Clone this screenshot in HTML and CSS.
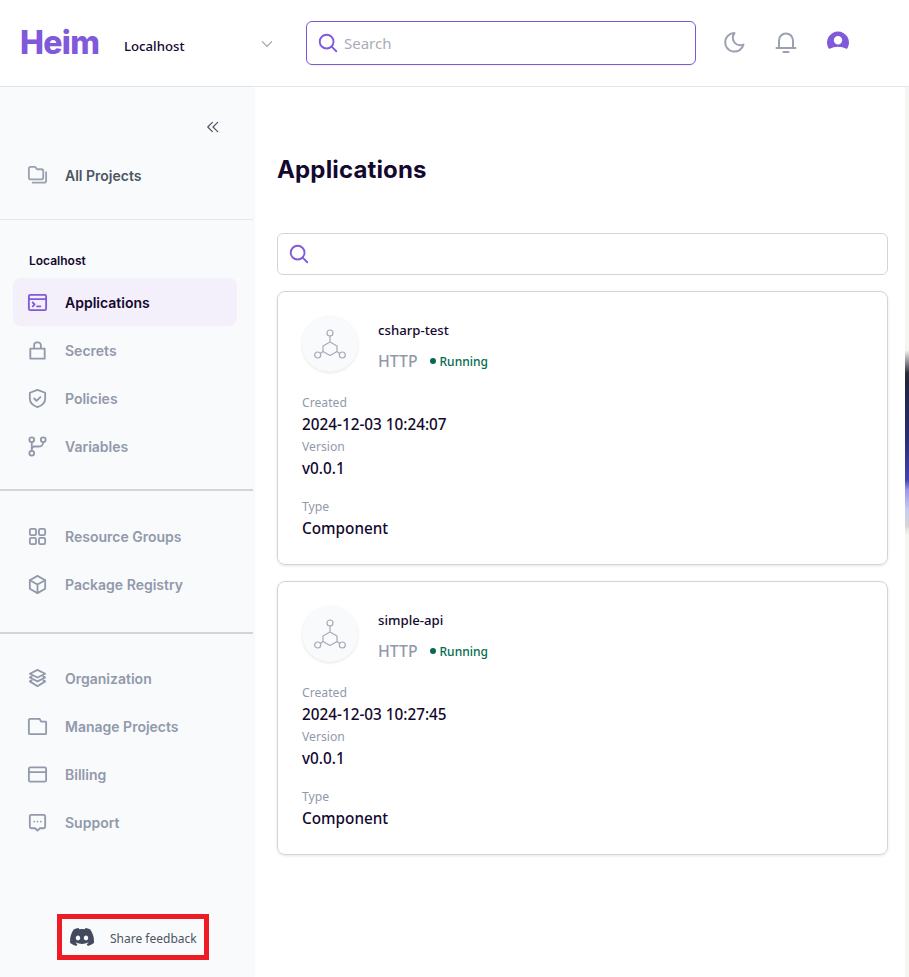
FILE: index.html
```html
<!DOCTYPE html>
<html lang="en">
<head>
  <meta charset="UTF-8" />
  <meta name="viewport" content="width=device-width, initial-scale=1.0"/>
  <title>Heim - Applications</title>
  <link rel="stylesheet" href="styles.css">
</head>
<body>
  <header class="topbar">
    <div class="logo">Heim</div>
    <div class="env-select">
      <span>Localhost</span>
      <svg class="chevron" viewBox="0 0 24 24"><path d="M5 8.500l7 7 7-7"/></svg>
    </div>
    <div class="top-search">
      <svg class="search-icon" viewBox="0 0 24 24"><circle cx="10.500" cy="10.500" r="7.500"/><path d="M16 16l5 5"/></svg>
      <span>Search</span>
    </div>
    <div class="top-icons">
      <svg class="top-icon" viewBox="0 0 24 24"><path d="M12.500 3a9.300 9.300 0 1 0 9 11.500c-1 .6-2 .8-3.200.8a7.500 7.500 0 0 1-7.500-7.500c0-1.900.6-3.500 1.700-4.800z"/></svg>
      <svg class="top-icon" viewBox="0 0 24 24"><path d="M2.500 18h19M5 18v-7.500a7 7 0 0 1 14 0V18M9.500 22h5"/></svg>
      <svg class="avatar" viewBox="0 0 24 22"><path fill-rule="evenodd" d="M12 .5a11 11 0 0 1 9.800 16c-.4.800-1 1.500-1.500 1.200-2.500-1.300-5.300-2-8.300-2s-5.800.7-8.300 2c-.5.300-1.100-.4-1.500-1.200A11 11 0 0 1 12 .5zm0 4.500a4.200 4.200 0 1 0 0 8.400 4.200 4.200 0 0 0 0-8.400z"/></svg>
    </div>
  </header>

  <div class="shell">
    <aside class="sidebar">
      <div class="collapse-row">
        <svg class="collapse" viewBox="0 0 24 24"><path d="M11 4l-8 8 8 8M20 4l-8 8 8 8"/></svg>
      </div>
      <div class="nav-item nav-dark">
        <svg class="nav-icon" viewBox="0 0 24 24"><path d="M3 5a2 2 0 0 1 2-2h4.500l2 2.500H16a2 2 0 0 1 2 2V14a2 2 0 0 1-2 2H5a2 2 0 0 1-2-2z"/><path d="M21 8.500V17.500a2 2 0 0 1-2 2H7"/></svg>
        All Projects
      </div>
      <div class="rule rule-light"></div>

      <div class="section-label">Localhost</div>
      <div class="nav-item nav-active">
        <svg class="nav-icon" viewBox="0 0 24 24"><rect x="3" y="4" width="18" height="16" rx="1.500"/><path d="M3 8.500h18M7 12l2 2-2 2M11.500 16H15"/></svg>
        Applications
      </div>
      <div class="nav-item">
        <svg class="nav-icon" viewBox="0 0 24 24"><path d="M4.500 10h15v10.500h-15zM8.500 10V6.500a3 3 0 0 1 3-3h1a3 3 0 0 1 3 3V10"/></svg>
        Secrets
      </div>
      <div class="nav-item">
        <svg class="nav-icon" viewBox="0 0 24 24"><path d="M12 3l8 3v6c0 4.500-3.300 7.500-8 9-4.700-1.500-8-4.500-8-9V6z"/><path d="M8.500 12l2.500 2.500 4-4"/></svg>
        Policies
      </div>
      <div class="nav-item">
        <svg class="nav-icon" viewBox="0 0 24 24"><circle cx="6" cy="5" r="2.500"/><circle cx="6" cy="19" r="2.500"/><circle cx="18" cy="5" r="2.500"/><path d="M6 7.500v9M18 7.500c0 3-2.500 4.500-5 4.500H9c-1.500 0-3 1-3 3"/></svg>
        Variables
      </div>
      <div class="rule rule-first"></div>

      <div class="nav-item">
        <svg class="nav-icon" viewBox="0 0 24 24"><rect x="4" y="4" width="6.500" height="6.500" rx="1.500"/><rect x="13.500" y="4" width="6.500" height="6.500" rx="1.500"/><rect x="4" y="13.500" width="6.500" height="6.500" rx="1.500"/><rect x="13.500" y="13.500" width="6.500" height="6.500" rx="1.500"/></svg>
        Resource Groups
      </div>
      <div class="nav-item">
        <svg class="nav-icon" viewBox="0 0 24 24"><path d="M12 3l8 4.500v9L12 21l-8-4.500v-9z"/><path d="M4 7.500l8 4.500 8-4.500M12 12v9"/></svg>
        Package Registry
      </div>
      <div class="rule rule-second"></div>

      <div class="nav-item">
        <svg class="nav-icon" viewBox="0 0 24 24"><path d="M12 3l8 4-8 4-8-4z"/><path d="M6 9.800L4 11l8 4 8-4-2-1.200"/><path d="M6 13.800L4 15l8 5 8-5-2-1.200"/></svg>
        Organization
      </div>
      <div class="nav-item">
        <svg class="nav-icon" viewBox="0 0 24 24"><path d="M3 5.500A1.500 1.500 0 0 1 4.500 4H14l2 3h4.500a.5.500 0 0 1 .5.500V19a1 1 0 0 1-1 1H4a1 1 0 0 1-1-1z"/></svg>
        Manage Projects
      </div>
      <div class="nav-item">
        <svg class="nav-icon" viewBox="0 0 24 24"><rect x="3" y="4.500" width="18" height="15" rx="1.500"/><path d="M3 9.500h18"/></svg>
        Billing
      </div>
      <div class="nav-item">
        <svg class="nav-icon" viewBox="0 0 24 24"><path d="M5.500 4h13A1.500 1.500 0 0 1 20 5.500v11a1.500 1.500 0 0 1-1.500 1.500h-4L12 20.500 9.500 18h-4A1.500 1.500 0 0 1 4 16.500v-11A1.500 1.500 0 0 1 5.500 4z"/><path d="M8.500 11h.01M12 11h.01M15.500 11h.01"/></svg>
        Support
      </div>

      <div class="feedback">
        <svg class="discord" viewBox="0 0 24 18"><path fill-rule="evenodd" d="M20.300 1.500A19.800 19.800 0 0 0 15.400 0c-.2.400-.5.900-.6 1.300a18.400 18.400 0 0 0-5.500 0C9.100.9 8.800.4 8.600 0a19.800 19.800 0 0 0-4.900 1.500C.6 6.100-.3 10.600.200 15a20 20 0 0 0 6 3c.5-.7.900-1.400 1.300-2.100-.7-.3-1.400-.6-2-1l.5-.4a14.200 14.200 0 0 0 12.100 0l.5.400c-.6.400-1.300.7-2 1 .4.700.8 1.400 1.300 2.100a20 20 0 0 0 6-3c.5-5.100-.9-9.500-3.600-13.500zM8 12.300c-1.200 0-2.200-1.100-2.200-2.400S6.800 7.500 8 7.500s2.200 1.100 2.200 2.400-1 2.400-2.200 2.400zm8 0c-1.200 0-2.200-1.100-2.200-2.400s1-2.400 2.200-2.400 2.200 1.100 2.200 2.400-1 2.400-2.200 2.400z"/></svg>
        <span>Share feedback</span>
      </div>
    </aside>

    <main class="content">
      <h1>Applications</h1>
      <div class="filter">
        <svg class="search-icon" viewBox="0 0 24 24"><circle cx="10.500" cy="10.500" r="7.500"/><path d="M16 16l5 5"/></svg>
      </div>

      <section class="card">
        <div class="card-head">
          <div class="app-badge">
            <svg class="app-icon" viewBox="0 0 34 34"><circle cx="17" cy="6" r="3"/><circle cx="4.700" cy="28" r="3"/><circle cx="29.300" cy="28" r="3"/><path d="M17 9v6M17 15l7 4v5.500l-7 4-7-4V19zM10 24.500l-2.700 2M24 24.500l2.700 2"/></svg>
          </div>
          <div>
            <div class="app-name">csharp-test</div>
            <div class="app-meta"><span class="proto">HTTP</span><span class="status"><i class="dot"></i>Running</span></div>
          </div>
        </div>
        <div class="field-label first">Created</div>
        <div class="field-value">2024-12-03 10:24:07</div>
        <div class="field-label">Version</div>
        <div class="field-value">v0.0.1</div>
        <div class="field-label spaced">Type</div>
        <div class="field-value">Component</div>
      </section>

      <section class="card">
        <div class="card-head">
          <div class="app-badge">
            <svg class="app-icon" viewBox="0 0 34 34"><circle cx="17" cy="6" r="3"/><circle cx="4.700" cy="28" r="3"/><circle cx="29.300" cy="28" r="3"/><path d="M17 9v6M17 15l7 4v5.500l-7 4-7-4V19zM10 24.500l-2.700 2M24 24.500l2.700 2"/></svg>
          </div>
          <div>
            <div class="app-name">simple-api</div>
            <div class="app-meta"><span class="proto">HTTP</span><span class="status"><i class="dot"></i>Running</span></div>
          </div>
        </div>
        <div class="field-label first">Created</div>
        <div class="field-value">2024-12-03 10:27:45</div>
        <div class="field-label">Version</div>
        <div class="field-value">v0.0.1</div>
        <div class="field-label spaced">Type</div>
        <div class="field-value">Component</div>
      </section>
    </main>

    <div class="edge-strip"></div>
  </div>
</body>
</html>
```

FILE: styles.css
```css
* {
  box-sizing: border-box;
}
body {
  margin: 0;
  height: 977px;
  overflow: hidden;
  display: flex;
  flex-direction: column;
  font-family: "Noto Sans", sans-serif;
  background: #fff;
  color: #14082f;
}
svg {
  display: block;
  fill: none;
  stroke: currentColor;
  stroke-width: 2;
  stroke-linecap: round;
  stroke-linejoin: round;
}

/* top bar */
.topbar {
  height: 87px;
  flex: none;
  display: flex;
  align-items: flex-start;
  border-bottom: 1px solid #e5e7eb;
  padding-left: 20px;
}
.logo {
  width: 104px;
  margin-top: 22px;
  font-family: Inter, sans-serif;
  font-size: 32px;
  line-height: 42px;
  font-weight: 800;
  letter-spacing: -0.7px;
  color: #8159db;
}
.env-select {
  width: 182px;
  height: 44px;
  margin-top: 24px;
  padding-right: 31px;
  display: flex;
  align-items: center;
  justify-content: space-between;
  font-size: 13.200px;
  font-weight: 500;
}
.chevron {
  width: 16px;
  height: 16px;
  margin-top: -5px;
  stroke-width: 1.800;
  color: #9ca3af;
}
.top-search {
  width: 390px;
  height: 44px;
  margin-top: 21px;
  display: flex;
  align-items: center;
  gap: 5px;
  padding-left: 10px;
  border: 1px solid #7c57d6;
  border-radius: 6px;
  font-size: 15px;
  color: #a9adb8;
  box-shadow: 0 1px 2px rgba(0, 0, 0, 0.05);
}
.search-icon {
  width: 22px;
  height: 22px;
  color: #8159db;
}
.top-icons {
  display: flex;
  align-items: flex-start;
  gap: 28px;
  margin: 30px 0 0 26px;
}
.top-icon {
  width: 24px;
  height: 24px;
  color: #9aa1b1;
}
.avatar {
  width: 24px;
  height: 22px;
  margin-top: 1px;
  fill: #8159db;
  stroke: none;
}

/* sidebar */
.shell {
  flex: 1;
  display: flex;
  min-height: 0;
}
.sidebar {
  width: 253px;
  flex: none;
  display: flex;
  flex-direction: column;
  background: #f9fafb;
  box-shadow: 1px 0 3px rgba(0, 0, 0, 0.05);
  font-family: Inter, sans-serif;
  position: relative;
}
.collapse-row {
  height: 64px;
  display: flex;
  justify-content: flex-end;
  padding: 33px 33px 0 0;
}
.collapse {
  width: 14px;
  height: 14px;
  stroke-width: 2;
  color: #4b5563;
}
.nav-item {
  height: 48px;
  flex: none;
  margin: 0 16px 0 13px;
  padding-left: 13px;
  display: flex;
  align-items: center;
  gap: 16px;
  font-size: 14px;
  font-weight: 600;
  color: #9199ab;
  border-radius: 8px;
}
.nav-dark {
  color: #4b5563;
}
.nav-dark .nav-icon {
  color: #9aa1b1;
}
.nav-active {
  background: #f3effb;
  color: #14082f;
}
.nav-active .nav-icon {
  color: #8159db;
}
.nav-icon {
  width: 23px;
  height: 23px;
  flex: none;
  stroke-width: 1.900;
}
.rule {
  flex: none;
}
.rule-light {
  height: 1px;
  background: #e5e7eb;
  margin-top: 20px;
}
.rule-first {
  height: 2px;
  background: #d1d5db;
  margin: 19px 0 21px;
}
.rule-second {
  height: 2px;
  background: #d1d5db;
  margin: 24px 0 20px;
}
.section-label {
  margin: 33px 0 9px 29px;
  font-size: 12px;
  line-height: 16px;
  font-weight: 600;
}
.feedback {
  position: absolute;
  left: 57px;
  top: 827px;
  width: 152px;
  height: 46px;
  border: 5px solid #ed1c24;
  display: flex;
  align-items: center;
  gap: 16px;
  padding-left: 8px;
  font-family: "Noto Sans", sans-serif;
  font-size: 12px;
  color: #4b5563;
}
.feedback span {
  padding-top: 2px;
}
.discord {
  width: 24px;
  height: 18px;
  fill: #414a5e;
  stroke: none;
  flex: none;
}

/* main column */
.content {
  flex: 1;
  min-width: 0;
  padding: 66px 17px 0 24px;
}
h1 {
  margin: 0 0 46px;
  font-family: Inter, sans-serif;
  font-size: 24px;
  line-height: 34px;
  font-weight: 700;
  letter-spacing: 0.15px;
}
.filter {
  height: 42px;
  display: flex;
  align-items: center;
  padding-left: 10px;
  border: 1px solid #d1d5db;
  border-radius: 6px;
  margin-bottom: 16px;
}
.card {
  height: 274px;
  margin-bottom: 16px;
  padding: 24px 24px 0;
  border: 1px solid #d1d5db;
  border-radius: 8px;
  box-shadow: 0 1px 3px rgba(0, 0, 0, 0.1);
}
.card-head {
  display: flex;
  gap: 20px;
}
.app-badge {
  width: 56px;
  height: 56px;
  flex: none;
  display: flex;
  align-items: center;
  justify-content: center;
  background: #f9fafb;
  border-radius: 50%;
  box-shadow: 0 1px 3px rgba(0, 0, 0, 0.1);
}
.app-icon {
  width: 34px;
  height: 34px;
  stroke-width: 1.200;
  color: #a6abb8;
}
.app-name {
  font-size: 13.200px;
  line-height: 18px;
  font-weight: 500;
  margin-top: 5px;
}
.app-meta {
  display: flex;
  align-items: center;
  gap: 12px;
  margin-top: 12px;
}
.proto {
  font-size: 15.800px;
  line-height: 20px;
  font-weight: 500;
  color: #9199ab;
}
.status {
  display: flex;
  align-items: center;
  gap: 4px;
  font-size: 12px;
  font-weight: 500;
  color: #046c4e;
}
.dot {
  width: 6px;
  height: 6px;
  border-radius: 50%;
  background: #046c4e;
}
.field-label {
  font-size: 12.200px;
  line-height: 18px;
  color: #9199ab;
  margin-top: 2px;
}
.field-label.first {
  margin-top: 22px;
}
.field-label.spaced {
  margin-top: 18px;
}
.field-value {
  font-size: 15.300px;
  line-height: 24px;
  font-weight: 500;
}

/* sliver of the window behind */
.edge-strip {
  width: 4px;
  flex: none;
  background: linear-gradient(to bottom, #f5f5f2 0, #f5f5f2 263px, #8f8f92 275px, #2b2b3d 286px, #22243f 296px, #252f78 353px, #4045b0 393px, #9b96ee 403px, #c9cdf0 423px, #d5d5d8 438px, #f5f5f2 448px);
}
```
